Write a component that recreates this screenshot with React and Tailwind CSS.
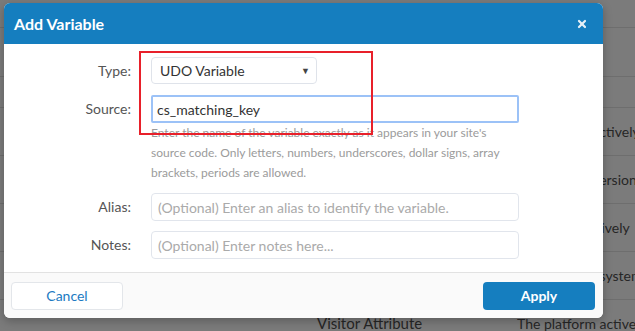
import { X } from 'lucide-react'

// rows of the page behind the dialog; only their ends show past its right edge
const rows = [
  { h: 'h-[28px]', w: 'w-[200px]', left: '', right: '' },
  { h: 'h-[49px]', w: 'w-[200px]', left: '', right: '' },
  { h: 'h-[31px]', w: 'w-[200px]', left: '', right: '' },
  { h: 'h-[48px]', w: 'w-[193px]', left: 'UDO Variable', right: 'The platform actively' },
  { h: 'h-[48px]', w: 'w-[193px]', left: 'UDO Variable', right: 'The platform version' },
  { h: 'h-[48px]', w: 'w-[183px]', left: 'UDO Variable', right: 'The platform actively' },
  { h: 'h-[48px]', w: 'w-[200px]', left: 'UDO Variable', right: 'The platform system' },
  { h: 'h-[48px]', w: 'w-[200px]', left: 'Visitor Attribute', right: 'The platform actively' },
]

function Field({ label, children }) {
  return (
    <div className="flex items-start">
      <label className="w-[128px] shrink-0 pr-[1px] text-right text-[14px] leading-[28px] text-[#555]">{label}</label>
      <div className="ml-[19px] flex-1">{children}</div>
    </div>
  )
}

export default function App() {
  return (
    <div className="relative h-[331px] w-[635px] overflow-hidden bg-[#7b7b7b] font-['Lato',sans-serif]">
      <div className="flex flex-col">
        {rows.map((r, i) => (
          <div key={i} className={`${r.h} flex shrink-0 items-center border-b border-[#6e6e6e] text-[14px] text-[#262626]`}>
            <span className={`ml-[317px] ${r.w} shrink-0 whitespace-nowrap text-[15px]`}>{r.left}</span>
            <span className="shrink-0 whitespace-nowrap">{r.right}</span>
          </div>
        ))}
      </div>

      <div className="absolute left-[4px] top-[3px] w-[599px] overflow-hidden rounded-[6px] bg-white shadow-[0_3px_10px_rgba(0,0,0,0.25)]">
        <div className="flex h-[41px] items-center justify-between bg-[#157ebf] pl-[10px] pr-[15px]">
          <h2 className="text-[16px] font-bold text-white">Add Variable</h2>
          <X className="h-[12px] w-[12px] text-[#e6f0f8]" strokeWidth={4.5} />
        </div>

        <div className="flex flex-col gap-[10px] pb-[13px] pl-0 pr-[84px] pt-[13px]">
          <Field label="Type:">
            <div className="flex h-[27px] w-[166px] items-center justify-between rounded-[4px] border border-[#dfe3ea] pl-[8px] pr-[6px] text-[14px] text-[#333]">
              <span>UDO Variable</span>
              <span className="text-[9px] text-[#444]">▼</span>
            </div>
          </Field>
          <Field label="Source:">
            <div className="flex h-[28px] items-center rounded-[2px] border-2 border-[#9cc2f7] pl-[4px] text-[14px] text-[#333]">
              cs_matching_key
            </div>
            <p className="text-[12px] leading-[20px] text-[#9b9b9b]">
              Enter the name of the variable exactly as it appears in your site's source code. Only letters, numbers, underscores, dollar signs, array brackets, periods are allowed.
            </p>
          </Field>
          <Field label="Alias:">
            <div className="flex h-[28px] items-center rounded-[4px] border border-[#e1e5ec] pl-[6px] text-[14px] text-[#aaa]">
              (Optional) Enter an alias to identify the variable.
            </div>
          </Field>
          <Field label="Notes:">
            <div className="flex h-[28px] items-center rounded-[4px] border border-[#e1e5ec] pl-[6px] text-[14px] text-[#aaa]">
              (Optional) Enter notes here...
            </div>
          </Field>
        </div>

        <div className="flex h-[46px] items-center justify-between border-t border-[#e2e2e2] bg-[#fafafa] pl-[7px] pr-[8px]">
          <button className="h-[28px] w-[112px] rounded-[4px] border border-[#e3e6ea] bg-white text-[14px] text-[#1b7ac2]">Cancel</button>
          <button className="h-[28px] w-[112px] rounded-[4px] bg-[#157ebf] text-[14px] font-bold text-white">Apply</button>
        </div>
      </div>

      {/* red annotation box drawn over the screenshot */}
      <div className="absolute left-[139px] top-[51px] h-[84px] w-[234px] border-2 border-[#e8202a]" />
    </div>
  )
}
